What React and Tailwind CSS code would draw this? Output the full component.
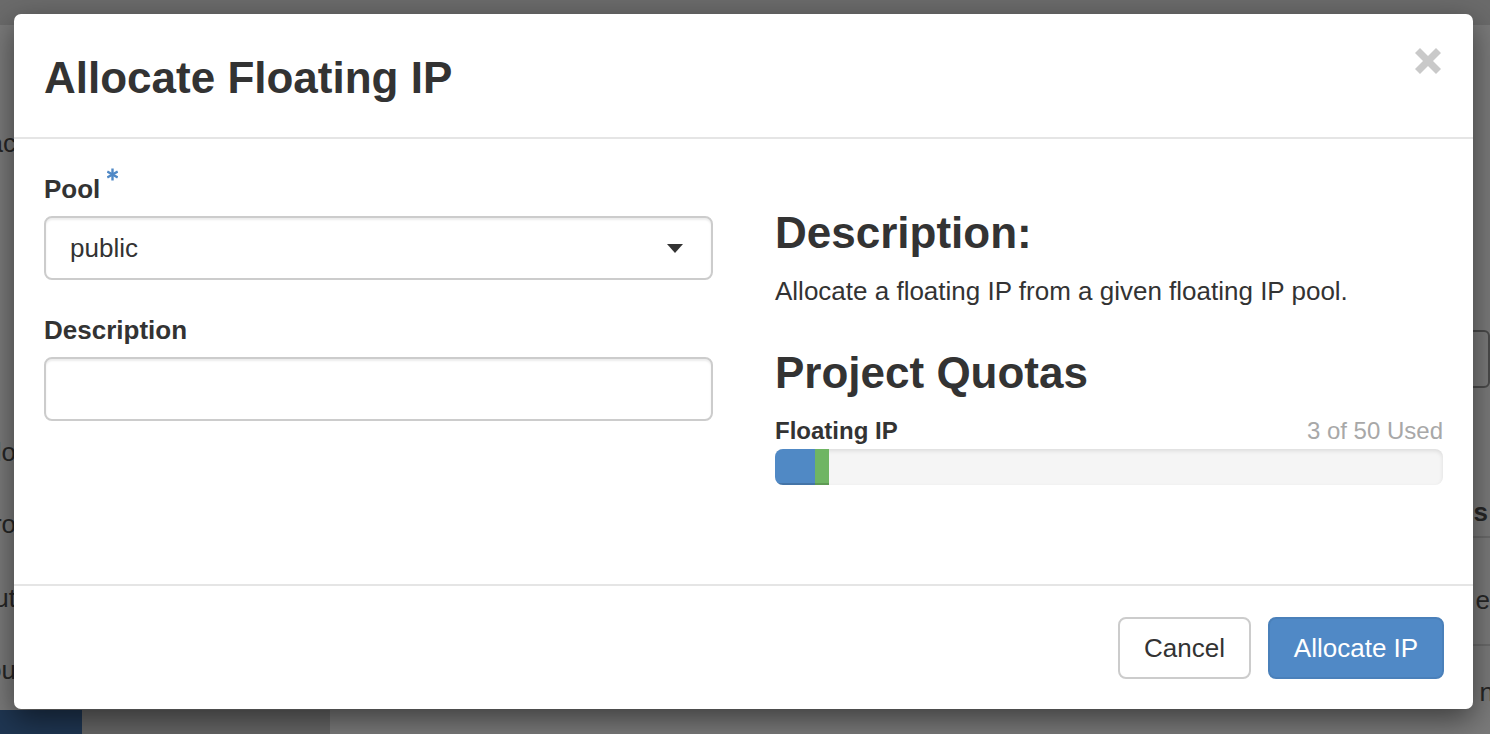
import React from 'react';

const Asterisk = () => (
  <svg
    width="11"
    height="13"
    viewBox="0 0 11 13"
    className="relative -top-[3px] ml-[7px] inline-block align-top"
  >
    <g stroke="#5089c6" strokeWidth="2.4">
      <line x1="5.5" y1="0.5" x2="5.5" y2="12.5" />
      <line x1="0.3" y1="3.5" x2="10.7" y2="9.5" />
      <line x1="0.3" y1="9.5" x2="10.7" y2="3.5" />
    </g>
  </svg>
);

const CloseIcon = () => (
  <svg width="26" height="26" viewBox="0 0 26 26">
    <g stroke="#c9c9c9" strokeWidth="7">
      <line x1="2.5" y1="2.5" x2="23.5" y2="23.5" />
      <line x1="23.5" y1="2.5" x2="2.5" y2="23.5" />
    </g>
  </svg>
);

const Caret = () => (
  <svg width="16" height="9" viewBox="0 0 16 9">
    <polygon points="0,0 16,0 8,9" fill="#333333" />
  </svg>
);

// faded page behind the backdrop, only its edges show
const BackgroundPage = () => (
  <div className="flex h-full flex-col text-[26px] leading-[36px] text-[#262626]">
    <div className="h-[25px] shrink-0 bg-[#6b6b6b]" />
    <div className="flex flex-1 justify-between overflow-hidden">
      <div className="flex w-[16px] flex-col items-end overflow-hidden pt-[100px] whitespace-nowrap">
        <span>ac</span>
        <span className="mt-[273px]">olo</span>
        <span className="mt-[36px]">ro</span>
        <span className="mt-[38px]">ut</span>
        <span className="mt-[36px]">ou</span>
      </div>
      <div className="flex w-[40px] flex-col items-end overflow-hidden pt-[305px]">
        <div className="h-[60px] w-[30px] rounded-[6px] border-2 border-[#4a4a4a]" />
        <span className="mt-[106px] pr-[2px] font-bold">s</span>
        <div className="mt-[6px] h-[2px] w-full bg-[#6a6a6a]" />
        <span className="mt-[44px]">e</span>
        <div className="mt-[26px] h-[2px] w-full bg-[#6a6a6a]" />
        <span className="mt-[28px] -mr-[4px]">n</span>
      </div>
    </div>
    <div className="flex h-[24px] shrink-0">
      <div className="w-[82px] bg-[#1f3652]" />
      <div className="w-[248px] bg-[#666666]" />
    </div>
  </div>
);

export default function App() {
  return (
    <div className="relative h-[734px] w-full overflow-hidden bg-[#7a7a7a] font-['Liberation_Sans',Arial,sans-serif] text-[#333333]">
      <BackgroundPage />

      <div className="absolute left-[14px] top-[14px] flex h-[695px] w-[1459px] flex-col rounded-[7px] bg-white shadow-[0_10px_30px_rgba(0,0,0,0.5)]">
        {/* header */}
        <div className="flex h-[125px] items-start justify-between border-b-2 border-[#e5e5e5] pl-[30px] pr-[32px]">
          <h4 className="pt-[40px] text-[44px] font-bold leading-[48px]">
            Allocate Floating IP
          </h4>
          <button className="mt-[34px]" aria-label="Close">
            <CloseIcon />
          </button>
        </div>

        {/* body */}
        <div className="grid h-[445px] grid-cols-[669px_668px] gap-[62px] px-[30px]">
          <div className="pt-[32px]">
            <label className="block text-[26px] font-bold leading-[36px]">
              Pool
              <Asterisk />
            </label>
            <div className="mt-[9px] flex h-[64px] items-center justify-between rounded-[8px] border-2 border-[#cccccc] pl-[24px] pr-[28px] shadow-[inset_0_2px_2px_rgba(0,0,0,0.075)]">
              <span className="text-[26px] leading-[36px]">public</span>
              <Caret />
            </div>

            <label className="mt-[32px] block text-[26px] font-bold leading-[36px]">
              Description
            </label>
            <div className="mt-[9px] h-[64px] rounded-[8px] border-2 border-[#cccccc] shadow-[inset_0_2px_2px_rgba(0,0,0,0.075)]" />
          </div>

          <div className="pt-[70px]">
            <h3 className="text-[44px] font-bold leading-[48px]">Description:</h3>
            <p className="mt-[16px] text-[26px] leading-[36px]">
              Allocate a floating IP from a given floating IP pool.
            </p>
            <h3 className="mt-[40px] text-[44px] font-bold leading-[48px]">
              Project Quotas
            </h3>
            <div className="mt-[17px] flex items-baseline justify-between">
              <span className="text-[24px] font-bold leading-[34px]">Floating IP</span>
              <span className="text-[24px] leading-[34px] text-[#a8a8a8]">
                3 of 50 Used
              </span>
            </div>
            <div className="mt-[1px] flex h-[36px] overflow-hidden rounded-[8px] bg-[#f5f5f5] shadow-[inset_0_2px_4px_rgba(0,0,0,0.1)]">
              <div className="h-full w-[40px] bg-[#5089c5] shadow-[inset_0_-2px_0_rgba(0,0,0,0.15)]" />
              <div className="h-full w-[14px] bg-[#6fb563] shadow-[inset_0_-2px_0_rgba(0,0,0,0.15)]" />
            </div>
          </div>
        </div>

        {/* footer */}
        <div className="flex h-[125px] justify-end gap-[17px] border-t-2 border-[#e5e5e5] px-[29px] pt-[31px]">
          <button className="h-[62px] w-[133px] rounded-[8px] border-2 border-[#cccccc] bg-white text-[26px] text-[#333333]">
            Cancel
          </button>
          <button className="h-[62px] w-[176px] rounded-[8px] border-2 border-[#4a80ba] bg-[#5089c6] text-[26px] text-white">
            Allocate IP
          </button>
        </div>
      </div>
    </div>
  );
}
